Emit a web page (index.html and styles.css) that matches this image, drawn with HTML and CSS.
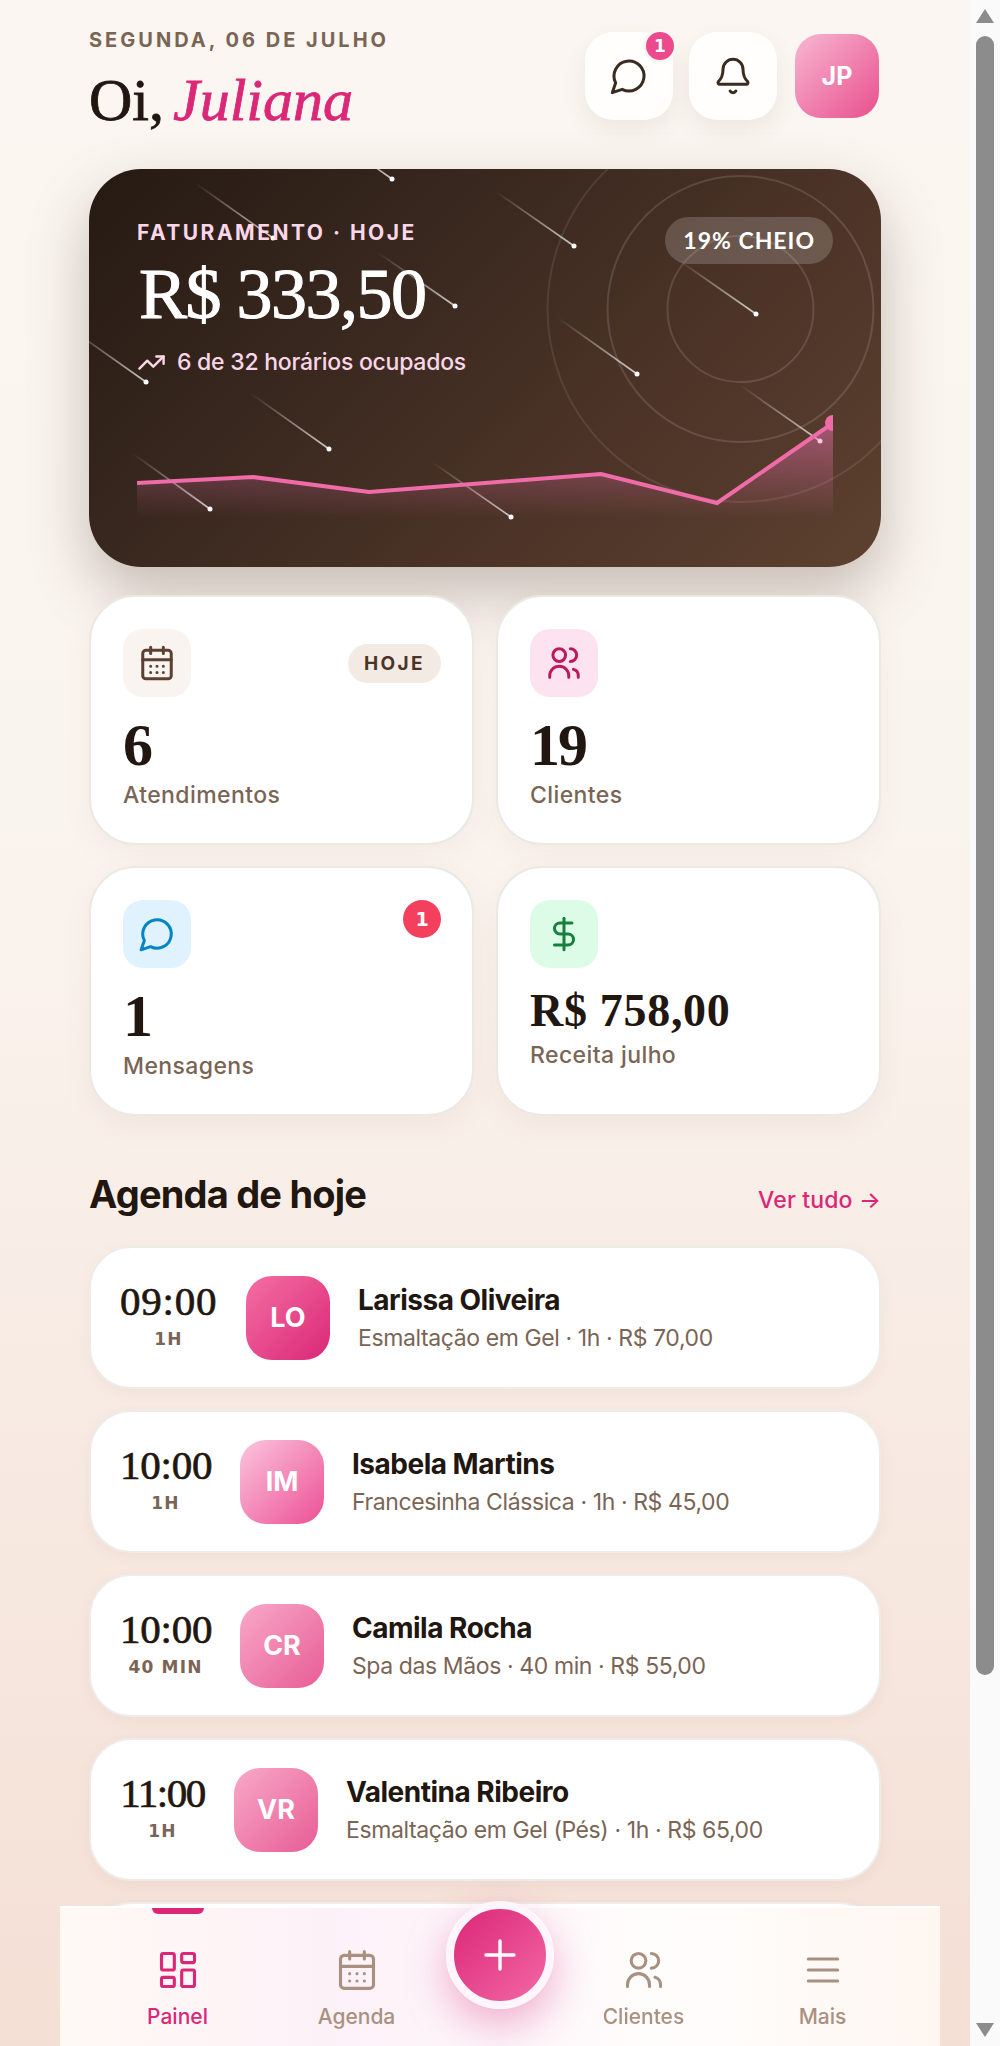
FILE: index.html
```html
<!DOCTYPE html>
<html lang="pt-BR">
<head>
    <meta charset="UTF-8">
    <meta name="viewport" content="width=device-width, initial-scale=1.0">
    <title>Painel</title>
    <link rel="stylesheet" href="styles.css">
</head>
<body>
    <main class="page">
        <div class="content">
            <!-- Top greeting -->
            <header class="top">
                <div class="top-text">
                    <p class="date">SEGUNDA, 06 DE JULHO</p>
                    <h1 class="hello">Oi, <em>Juliana</em></h1>
                </div>
                <div class="top-actions">
                    <button class="icon-btn">
                        <svg class="icon" viewBox="0 0 24 24"><path d="M7.9 20A9 9 0 1 0 4 16.1L2 22Z"/></svg>
                        <span class="icon-btn-badge">1</span>
                    </button>
                    <button class="icon-btn">
                        <svg class="icon" viewBox="0 0 24 24"><path d="M10.268 21a2 2 0 0 0 3.464 0"/><path d="M3.262 15.326A1 1 0 0 0 4 17h16a1 1 0 0 0 .74-1.673C19.41 13.956 18 12.499 18 8A6 6 0 0 0 6 8c0 4.499-1.411 5.956-2.738 7.326"/></svg>
                    </button>
                    <div class="top-avatar">JP</div>
                </div>
            </header>

            <!-- Revenue card -->
            <section class="hero">
                <svg class="hero-deco" viewBox="0 0 792 398">
                    <defs>
                        <linearGradient id="tail" x1="0" y1="0" x2="1" y2="1">
                            <stop offset="0" stop-color="#fff" stop-opacity="0"/>
                            <stop offset="1" stop-color="#fff" stop-opacity="0.75"/>
                        </linearGradient>
                    </defs>
                    <circle class="ring" cx="651.5" cy="140" r="73"/>
                    <circle class="ring" cx="651.5" cy="140" r="133"/>
                    <circle class="ring ring-far" cx="651.5" cy="140" r="193"/>
                    <g class="stars">
                        <path d="M225 -45 303 10"/><circle cx="303" cy="10" r="2.5"/>
                        <path d="M106 14 184 69"/><circle cx="184" cy="69" r="2.5"/>
                        <path d="M288 83 366 137"/><circle cx="366" cy="137" r="2.5"/>
                        <path d="M-21 158 57 213"/><circle cx="57" cy="213" r="2.5"/>
                        <path d="M161 224 240 280"/><circle cx="240" cy="280" r="2.5"/>
                        <path d="M43 284 121 340"/><circle cx="121" cy="340" r="2.5"/>
                        <path d="M406 22 485 77"/><circle cx="485" cy="77" r="2.5"/>
                        <path d="M588 90 667 145"/><circle cx="667" cy="145" r="2.5"/>
                        <path d="M469 149 548 205"/><circle cx="548" cy="205" r="2.5"/>
                        <path d="M343 293 422 348"/><circle cx="422" cy="348" r="2.5"/>
                        <path d="M651 216 731 272"/><circle cx="731" cy="272" r="2.5"/>
                    </g>
                </svg>
                <div class="hero-top">
                    <div>
                        <p class="hero-label">FATURAMENTO · HOJE</p>
                        <p class="hero-value">R$ 333,50</p>
                        <p class="hero-sub">
                            <svg class="icon-trend" viewBox="0 0 24 24"><path d="M22 7 13.5 15.5 8.5 10.5 2 17"/><path d="M16 7h6v6"/></svg>
                            6 de 32 horários ocupados
                        </p>
                    </div>
                    <span class="hero-badge">19% CHEIO</span>
                </div>
                <svg class="hero-chart" viewBox="0 0 696 103">
                    <defs>
                        <linearGradient id="area" gradientUnits="userSpaceOnUse" x1="0" y1="8" x2="0" y2="103">
                            <stop offset="0" stop-color="#f472b6" stop-opacity="0.5"/>
                            <stop offset="1" stop-color="#f472b6" stop-opacity="0"/>
                        </linearGradient>
                    </defs>
                    <path fill="url(#area)" d="M0 68 116 62 232 77 348 68 464 59 580 88 696 8V103H0Z"/>
                    <path class="chart-line" d="M0 68 116 62 232 77 348 68 464 59 580 88 696 8"/>
                    <circle class="chart-dot" cx="696" cy="8" r="8"/>
                </svg>
            </section>

            <!-- Stats -->
            <section class="stats">
                <div class="stat">
                    <div class="stat-top">
                        <span class="stat-icon stat-icon-cal">
                            <svg class="icon" viewBox="0 0 24 24"><path d="M8 2v4M16 2v4"/><rect x="3" y="4" width="18" height="18" rx="2"/><path d="M3 10h18M8 14h.01M12 14h.01M16 14h.01M8 18h.01M12 18h.01M16 18h.01"/></svg>
                        </span>
                        <span class="pill">HOJE</span>
                    </div>
                    <p class="stat-value">6</p>
                    <p class="stat-label">Atendimentos</p>
                </div>
                <div class="stat">
                    <div class="stat-top">
                        <span class="stat-icon stat-icon-users">
                            <svg class="icon" viewBox="0 0 24 24"><circle cx="9" cy="7" r="4"/><path d="M3 21v-1a6 6 0 0 1 6-6 6 6 0 0 1 6 6v1"/><path d="M16 3a4 4 0 0 1 0 8"/><path d="M21 21v-1a4 4 0 0 0-3-4"/></svg>
                        </span>
                    </div>
                    <p class="stat-value">19</p>
                    <p class="stat-label">Clientes</p>
                </div>
                <div class="stat">
                    <div class="stat-top">
                        <span class="stat-icon stat-icon-msg">
                            <svg class="icon" viewBox="0 0 24 24"><path d="M7.9 20A9 9 0 1 0 4 16.1L2 22Z"/></svg>
                        </span>
                        <span class="count">1</span>
                    </div>
                    <p class="stat-value">1</p>
                    <p class="stat-label">Mensagens</p>
                </div>
                <div class="stat">
                    <div class="stat-top">
                        <span class="stat-icon stat-icon-money">
                            <svg class="icon" viewBox="0 0 24 24"><path d="M12 2v20"/><path d="M17 5H9.5a3.5 3.5 0 0 0 0 7h5a3.5 3.5 0 0 1 0 7H6"/></svg>
                        </span>
                    </div>
                    <p class="stat-value stat-value-money">R$ 758,00</p>
                    <p class="stat-label">Receita julho</p>
                </div>
            </section>

            <!-- Today's schedule -->
            <div class="section-head">
                <h2>Agenda de hoje</h2>
                <a class="see-all">Ver tudo →</a>
            </div>
            <section class="list">
                <div class="row">
                    <div class="time time-09">
                        <p class="hour">09:00</p>
                        <p class="dur">1H</p>
                    </div>
                    <div class="avatar avatar-lo">LO</div>
                    <div>
                        <p class="name">Larissa Oliveira</p>
                        <p class="service">Esmaltação em Gel · 1h · R$ 70,00</p>
                    </div>
                </div>
                <div class="row">
                    <div class="time time-10">
                        <p class="hour">10:00</p>
                        <p class="dur">1H</p>
                    </div>
                    <div class="avatar avatar-im">IM</div>
                    <div>
                        <p class="name">Isabela Martins</p>
                        <p class="service">Francesinha Clássica · 1h · R$ 45,00</p>
                    </div>
                </div>
                <div class="row">
                    <div class="time time-10">
                        <p class="hour">10:00</p>
                        <p class="dur">40 MIN</p>
                    </div>
                    <div class="avatar avatar-cr">CR</div>
                    <div>
                        <p class="name">Camila Rocha</p>
                        <p class="service">Spa das Mãos · 40 min · R$ 55,00</p>
                    </div>
                </div>
                <div class="row">
                    <div class="time time-11">
                        <p class="hour">11:00</p>
                        <p class="dur">1H</p>
                    </div>
                    <div class="avatar avatar-cr">VR</div>
                    <div>
                        <p class="name">Valentina Ribeiro</p>
                        <p class="service">Esmaltação em Gel (Pés) · 1h · R$ 65,00</p>
                    </div>
                </div>
                <div class="row"></div>
            </section>
        </div>
    </main>

    <!-- Fake window scrollbar -->
    <aside class="scrollbar">
        <span class="arrow arrow-up"></span>
        <span class="thumb"></span>
        <span class="arrow arrow-down"></span>
    </aside>

    <!-- Bottom navigation -->
    <nav class="nav">
        <a class="nav-item nav-item-active">
            <span class="nav-mark"></span>
            <svg class="icon" viewBox="0 0 24 24"><rect x="3" y="3" width="7" height="9" rx="1"/><rect x="14" y="3" width="7" height="5" rx="1"/><rect x="14" y="12" width="7" height="9" rx="1"/><rect x="3" y="16" width="7" height="5" rx="1"/></svg>
            Painel
        </a>
        <a class="nav-item">
            <svg class="icon" viewBox="0 0 24 24"><path d="M8 2v4M16 2v4"/><rect x="3" y="4" width="18" height="18" rx="2"/><path d="M3 10h18M8 14h.01M12 14h.01M16 14h.01M8 18h.01M12 18h.01M16 18h.01"/></svg>
            Agenda
        </a>
        <div class="fab-slot">
            <button class="fab">
                <svg class="icon-plus" viewBox="0 0 32 32"><path d="M16 2v28M2 16h28"/></svg>
            </button>
        </div>
        <a class="nav-item">
            <svg class="icon" viewBox="0 0 24 24"><circle cx="9" cy="7" r="4"/><path d="M3 21v-1a6 6 0 0 1 6-6 6 6 0 0 1 6 6v1"/><path d="M16 3a4 4 0 0 1 0 8"/><path d="M21 21v-1a4 4 0 0 0-3-4"/></svg>
            Clientes
        </a>
        <a class="nav-item">
            <svg class="icon" viewBox="0 0 24 24"><path d="M4 6h16M4 12h16M4 18h16"/></svg>
            Mais
        </a>
    </nav>
</body>
</html>
```

FILE: styles.css
```css
/* General styles */
* {
    box-sizing: border-box;
}

body {
    margin: 0;
    height: 100vh;
    display: flex;
    overflow: hidden;
    font-family: Inter, sans-serif;
    color: #211610;
}

p, h1, h2 {
    margin: 0;
}

.icon {
    width: 38px;
    height: 38px;
    fill: none;
    stroke: currentColor;
    stroke-width: 1.9;
    stroke-linecap: round;
    stroke-linejoin: round;
}

.page {
    flex: 1;
    min-width: 0;
    overflow: hidden;
    background: linear-gradient(180deg, #fbf6f1 0%, #faf4ee 40%, #f8ede6 62%, #f4dfd4 100%);
}

.content {
    max-width: 880px;
    margin: 0 auto;
    padding: 32px 44px 0;
}

/* Greeting */
.top {
    display: flex;
    justify-content: space-between;
    height: 137px;
}

.date {
    font-size: 20px;
    font-weight: 700;
    letter-spacing: 3px;
    line-height: 16px;
    color: #7a6555;
}

.hello {
    margin-top: 18px;
    font-family: "Liberation Serif", serif;
    font-size: 60px;
    font-weight: 400;
    word-spacing: -6px;
    line-height: 68px;
    -webkit-text-stroke: 0.8px #211610;
}

.hello em {
    color: #db2777;
    -webkit-text-stroke: 0.8px #db2777;
}

.top-actions {
    display: flex;
    gap: 16px;
    height: 88px;
}

.icon-btn {
    position: relative;
    width: 88px;
    height: 88px;
    padding: 0;
    border: none;
    border-radius: 28px;
    background: #fffefc;
    color: #3b2a1f;
    display: flex;
    align-items: center;
    justify-content: center;
    box-shadow: 0 10px 24px rgba(90, 60, 35, 0.08);
}

.icon-btn .icon {
    width: 40px;
    height: 40px;
    stroke-width: 1.8;
}

.icon-btn-badge {
    position: absolute;
    top: -3px;
    right: -4px;
    width: 34px;
    height: 34px;
    border: 3px solid #fbf6f1;
    border-radius: 50%;
    background: #ec4a8c;
    color: #fff;
    font-family: "DejaVu Sans", sans-serif;
    font-size: 17px;
    font-weight: 700;
    line-height: 28px;
    text-align: center;
}

.top-avatar {
    width: 84px;
    height: 84px;
    margin: 2px;
    border-radius: 26px;
    background: linear-gradient(135deg, #f8b7d2, #e84f8d);
    color: #fff;
    font-size: 25px;
    font-weight: 700;
    display: flex;
    align-items: center;
    justify-content: center;
}

/* Revenue card */
.hero {
    position: relative;
    height: 398px;
    padding: 48px;
    border-radius: 52px;
    overflow: hidden;
    background: linear-gradient(135deg, #251a13 0%, #3c2a20 40%, #4a3226 62%, #5d4130 100%);
    box-shadow: 0 26px 60px rgba(60, 40, 25, 0.28);
    color: #fff;
    display: flex;
    flex-direction: column;
    justify-content: space-between;
}

.hero-deco {
    position: absolute;
    inset: 0;
    width: 792px;
    height: 398px;
}

.ring {
    fill: none;
    stroke: rgba(255, 255, 255, 0.13);
    stroke-width: 2;
}

.ring-far {
    stroke: rgba(255, 255, 255, 0.09);
}

.stars path {
    stroke: url(#tail);
    stroke-width: 1.6;
}

.stars circle {
    fill: #fff;
}

.hero-top {
    position: relative;
    display: flex;
    justify-content: space-between;
    align-items: flex-start;
}

.hero-label {
    margin-top: 4px;
    font-size: 21px;
    font-weight: 700;
    letter-spacing: 2.5px;
    line-height: 24px;
    color: #fbd7e9;
}

.hero-value {
    margin-top: 8px;
    padding-left: 2px;
    font-family: "Liberation Serif", serif;
    font-size: 72px;
    letter-spacing: -1.5px;
    line-height: 82px;
    -webkit-text-stroke: 1.1px #fff;
}

.hero-sub {
    margin-top: 12px;
    font-size: 23px;
    font-weight: 500;
    letter-spacing: -0.25px;
    line-height: 30px;
    color: #fbd7e9;
    display: flex;
    align-items: center;
    gap: 11px;
}

.icon-trend {
    width: 29px;
    height: 29px;
    fill: none;
    stroke: currentColor;
    stroke-width: 2;
    stroke-linecap: round;
    stroke-linejoin: round;
}

.hero-badge {
    height: 47px;
    padding: 0 18px;
    border-radius: 24px;
    background: rgba(255, 255, 255, 0.18);
    font-family: Lato, sans-serif;
    font-size: 23px;
    font-weight: 700;
    letter-spacing: 1px;
    line-height: 47px;
}

.hero-chart {
    position: relative;
    display: block;
    width: 696px;
    height: 103px;
    margin-bottom: 1px;
}

.chart-line {
    fill: none;
    stroke: #f06ca8;
    stroke-width: 4;
}

.chart-dot {
    fill: #f06ca8;
}

/* Stats */
.stats {
    position: relative;
    margin-top: 28px;
    display: grid;
    grid-template-columns: 1fr 1fr;
    gap: 21px 22px;
}

.stat {
    height: 250px;
    padding: 32px 31px 31px 32px;
    background: #fff;
    border: 2px solid #ece8e4;
    border-radius: 46px;
    box-shadow: 0 10px 30px rgba(130, 90, 60, 0.06);
}

.stat-top {
    display: flex;
    justify-content: space-between;
    align-items: center;
}

.stat-icon {
    width: 68px;
    height: 68px;
    border-radius: 20px;
    display: flex;
    align-items: center;
    justify-content: center;
}

.stat-icon-cal {
    background: #f9f4ef;
    color: #5c4033;
}

.stat-icon-users {
    background: #fde3f0;
    color: #be185d;
}

.stat-icon-msg {
    background: #e0f2fe;
    color: #0284c7;
}

.stat-icon-money {
    background: #dcfce7;
    color: #15803d;
}

.pill {
    height: 39px;
    padding: 0 16px;
    border-radius: 20px;
    background: #f3ebe3;
    color: #4a3528;
    font-size: 19px;
    font-weight: 700;
    letter-spacing: 2.4px;
    line-height: 39px;
}

.count {
    align-self: flex-start;
    width: 38px;
    height: 38px;
    border-radius: 50%;
    background: #f43f5e;
    color: #fff;
    font-family: "DejaVu Sans", sans-serif;
    font-size: 19px;
    font-weight: 700;
    line-height: 38px;
    text-align: center;
}

.stat-value {
    margin-top: 15px;
    font-family: "Liberation Serif", serif;
    font-size: 60px;
    font-weight: 700;
    letter-spacing: -2px;
    line-height: 66px;
}

.stat-value-money {
    margin-top: 16px;
    font-size: 46px;
    letter-spacing: 0.7px;
    line-height: 54px;
}

.stat-label {
    margin-top: 2px;
    font-size: 23px;
    font-weight: 500;
    letter-spacing: 0.4px;
    line-height: 30px;
    color: #7a6555;
}

/* Schedule */
.section-head {
    margin-top: 55px;
    display: flex;
    justify-content: space-between;
    align-items: baseline;
}

.section-head h2 {
    font-size: 38px;
    font-weight: 700;
    letter-spacing: -0.8px;
    line-height: 46px;
}

.see-all {
    font-size: 23px;
    font-weight: 500;
    letter-spacing: 0.15px;
    color: #db2777;
}

.list {
    margin-top: 29px;
    display: flex;
    flex-direction: column;
    gap: 21px;
}

.row {
    flex: none;
    height: 143px;
    padding: 0 29px;
    background: #fff;
    border: 2px solid #efebe8;
    border-radius: 42px;
    box-shadow: 0 4px 14px rgba(130, 90, 60, 0.06);
    display: flex;
    align-items: center;
    gap: 28px;
}

.time {
    margin-right: 1px;
    padding-bottom: 8px;
    text-align: center;
}

.time-09 {
    width: 97px;
}

.time-10 {
    width: 91px;
}

.time-11 {
    width: 85px;
}

.hour {
    font-family: "Liberation Serif", serif;
    font-size: 41px;
    letter-spacing: 0.8px;
    line-height: 46px;
    white-space: nowrap;
    -webkit-text-stroke: 0.7px #211610;
}

.time-10 .hour {
    letter-spacing: -0.2px;
}

.time-11 .hour {
    letter-spacing: -1.5px;
}

.dur {
    margin-top: 4px;
    font-family: "DejaVu Sans", sans-serif;
    font-size: 17px;
    font-weight: 700;
    letter-spacing: 1.2px;
    line-height: 22px;
    color: #7a6555;
    white-space: nowrap;
}

.avatar {
    flex: none;
    width: 84px;
    height: 84px;
    border-radius: 26px;
    color: #fff;
    font-size: 27px;
    font-weight: 700;
    display: flex;
    align-items: center;
    justify-content: center;
}

.avatar-lo {
    background: linear-gradient(135deg, #f46fa3, #db2777);
}

.avatar-im {
    background: linear-gradient(135deg, #fbc6dd, #ec4f96);
}

.avatar-cr {
    background: linear-gradient(135deg, #f8a9c9, #e85c95);
}

.name {
    font-size: 28px;
    font-weight: 700;
    letter-spacing: -0.5px;
    line-height: 36px;
}

.service {
    margin-top: 5px;
    font-size: 23px;
    font-weight: 400;
    letter-spacing: -0.4px;
    line-height: 30px;
    color: #7a6555;
}

/* Scrollbar */
.scrollbar {
    flex: none;
    width: 30px;
    padding: 9px 6px;
    background: #fafafa;
    display: flex;
    flex-direction: column;
    align-items: center;
}

.thumb {
    width: 18px;
    height: 1639px;
    margin-top: 13px;
    margin-bottom: auto;
    border-radius: 9px;
    background: #8c8c8c;
}

.arrow {
    width: 18px;
    height: 14px;
    background: #8c8c8c;
}

.arrow-up {
    clip-path: polygon(50% 0, 100% 100%, 0 100%);
}

.arrow-down {
    clip-path: polygon(0 0, 100% 0, 50% 100%);
}

/* Bottom navigation */
.nav {
    position: fixed;
    left: 60px;
    bottom: 0;
    width: 880px;
    height: 140px;
    padding: 0 28px;
    border-top: 2px solid #fff;
    background: linear-gradient(90deg, #fff9f4 0%, #fdf1f8 30%, #fdf6fa 48%, #fffdfc 70%, #fef6f1 100%);
    display: grid;
    grid-template-columns: 1fr 1fr 108px 1fr 1fr;
}

.nav-item {
    position: relative;
    padding-top: 40px;
    color: #a89180;
    font-size: 21px;
    font-weight: 500;
    line-height: 28px;
    text-align: center;
    display: flex;
    flex-direction: column;
    align-items: center;
    gap: 11px;
}

.nav-item .icon {
    width: 44px;
    height: 44px;
    stroke-width: 1.7;
}

.nav-item-active {
    color: #db2777;
}

.nav-mark {
    position: absolute;
    top: 0;
    left: 64px;
    width: 52px;
    height: 6px;
    border-radius: 0 0 7px 7px;
    background: #db2777;
}

.fab-slot {
    position: relative;
}

.fab {
    position: absolute;
    top: -7px;
    left: 0;
    width: 108px;
    height: 108px;
    padding: 0;
    border: 8px solid #fff5fa;
    border-radius: 50%;
    background: linear-gradient(135deg, #db2777, #f268a6);
    box-shadow: 0 16px 40px rgba(219, 39, 119, 0.35);
    display: flex;
    align-items: center;
    justify-content: center;
}

.icon-plus {
    width: 32px;
    height: 32px;
    fill: none;
    stroke: #fff;
    stroke-width: 3.4;
    stroke-linecap: round;
}
```
